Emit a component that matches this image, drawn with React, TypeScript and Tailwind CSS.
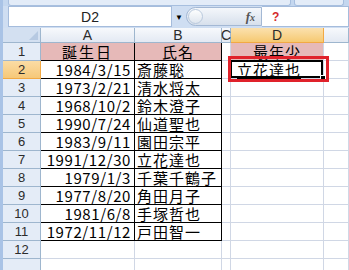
import React from "react";

const rows = [
  ["1984/3/15", "斎藤聡"],
  ["1973/2/21", "清水将太"],
  ["1968/10/2", "鈴木澄子"],
  ["1990/7/24", "仙道聖也"],
  ["1983/9/11", "園田宗平"],
  ["1991/12/30", "立花達也"],
  ["1979/1/3", "千葉千鶴子"],
  ["1977/8/20", "角田月子"],
  ["1981/6/8", "手塚哲也"],
  ["1972/11/12", "戸田智一"],
];

const jp = "font-['Noto_Sans_CJK_JP',sans-serif]";
const grid = "grid grid-cols-[38px_94px_87px_9px_93px_1fr]";
const rowHead = "flex items-center justify-center border-r border-b border-[#9eb6ce] bg-[#e4ecf7] text-[13px] leading-none text-[#2b2b2b] font-['Liberation_Sans',sans-serif]";
const colHead = "flex items-center justify-center border-r border-b border-[#9eb6ce] bg-gradient-to-b from-[#f7f9fc] to-[#e3e9f3] text-[14px] leading-none text-[#2b2b2b] font-['Liberation_Sans',sans-serif]";
const gridCell = "border-r border-b border-[#d0d7e5]";

export default function App() {
  return (
    <div className="flex h-[270px] w-[349px] overflow-hidden bg-white">
      <div className="w-[3px] shrink-0 bg-[#a9c3e6]" />
      <div className="flex min-w-0 flex-1 flex-col">
        {/* ribbon edge */}
        <div className="flex h-[8px] gap-[3px] bg-[#c4d7ef] px-[5px]">
          <div className="h-[6px] w-[283px] rounded-b-[3px] border border-t-0 border-[#a7bfdf] bg-[#e3ecf8]" />
          <div className="h-[6px] flex-1 rounded-b-[3px] border border-t-0 border-[#a7bfdf] bg-[#e3ecf8]" />
        </div>

        {/* formula bar */}
        <div className="flex h-[23px] items-center bg-[#cfdef2] pb-[1px]">
          <div className="ml-[5px] flex h-[21px] w-[164px] items-center justify-center border border-[#a5bcdc] bg-white text-[14px] leading-none text-[#222] font-['Liberation_Sans',sans-serif]">
            D2
          </div>
          <div className="flex w-[14px] items-center justify-center text-[8px] leading-none text-black">▼</div>
          <div className="flex h-[19px] w-[76px] items-center rounded-l-full border border-[#a3b8d4] bg-gradient-to-b from-[#f4f7fb] to-[#d7e0ec]">
            <div className="ml-[1px] h-[15px] w-[15px] rounded-full border border-[#b9c9dd] bg-gradient-to-b from-[#fdfefe] to-[#dfe6ef]" />
            <span className="ml-auto mr-[6px] font-['Liberation_Serif',serif] text-[13px] font-bold italic leading-none text-[#555]">
              f<span className="text-[10px]">x</span>
            </span>
          </div>
          <div className="flex h-[21px] flex-1 items-center border border-l-0 border-[#a5bcdc] bg-white pl-[10px] font-['Liberation_Sans',sans-serif] text-[12px] font-bold leading-none text-[#d42a2a]">
            ?
          </div>
        </div>

        {/* column headers */}
        <div className={`${grid} h-[18px]`}>
          <div className="relative border-r border-b border-[#9eb6ce] bg-[#d3e0f1]">
            <svg className="absolute bottom-[2px] right-[2px]" width="9" height="9" viewBox="0 0 9 9">
              <path d="M9 0 L9 9 L0 9 Z" fill="#b6c9e2" />
            </svg>
          </div>
          <div className={colHead}>A</div>
          <div className={colHead}>B</div>
          <div className={colHead}>C</div>
          <div className="flex items-center justify-center border-r border-b border-[#f2a944] bg-gradient-to-b from-[#fbe1ae] to-[#f6c970] text-[14px] leading-none text-[#2b2b2b] font-['Liberation_Sans',sans-serif]">
            D
          </div>
          <div className={colHead} />
        </div>

        {/* rows */}
        <div className={`${grid} auto-rows-[18px] ${jp} text-[15px] leading-none text-black`}>
          <div className={rowHead}>1</div>
          <div className="flex items-center justify-center border-r border-b border-black bg-[#e6b9b8] tracking-[2px]">誕生日</div>
          <div className="flex items-center justify-center border-r border-b border-black bg-[#e6b9b8] tracking-[1px]">氏名</div>
          <div className={gridCell} />
          <div className="flex items-center justify-center border-r border-b border-[#d0d7e5] bg-[#e6b9b8] tracking-[1px]">最年少</div>
          <div className={gridCell} />

          {rows.map(([date, name], i) => (
            <React.Fragment key={date}>
              <div
                className={
                  i === 0
                    ? "flex items-center justify-center border-r border-b border-[#f2a944] bg-gradient-to-b from-[#fbdca4] to-[#f6c878] text-[13px] leading-none text-[#2b2b2b] font-['Liberation_Sans',sans-serif]"
                    : rowHead
                }
              >
                {i + 2}
              </div>
              <div className="flex items-center justify-end border-r border-b border-black pr-[3px] tracking-[0.6px]">{date}</div>
              <div className="flex items-center border-r border-b border-black pl-[2px] tracking-[1px]">{name}</div>
              <div className={gridCell} />
              {i === 0 ? (
                <div className="relative flex items-center border-r border-b border-[#d0d7e5] pl-[6px] tracking-[1px]">
                  <span className="underline underline-offset-[2px]">立花達也</span>
                  <div className="absolute -left-[1px] -top-[1px] bottom-0 right-0 border-2 border-black" />
                  <div className="absolute -bottom-[3px] -right-[3px] h-[6px] w-[6px] border border-white bg-black" />
                  <div className="absolute -bottom-[4px] -left-[3px] -right-[6px] -top-[5px] border-[3px] border-[#e0222b]" />
                </div>
              ) : (
                <div className={gridCell} />
              )}
              <div className={gridCell} />
            </React.Fragment>
          ))}

          <div className={rowHead}>12</div>
          <div className={gridCell} />
          <div className={gridCell} />
          <div className={gridCell} />
          <div className={gridCell} />
          <div className={gridCell} />

          <div className={rowHead} />
          <div className={gridCell} />
          <div className={gridCell} />
          <div className={gridCell} />
          <div className={gridCell} />
          <div className={gridCell} />
        </div>
      </div>
    </div>
  );
}
